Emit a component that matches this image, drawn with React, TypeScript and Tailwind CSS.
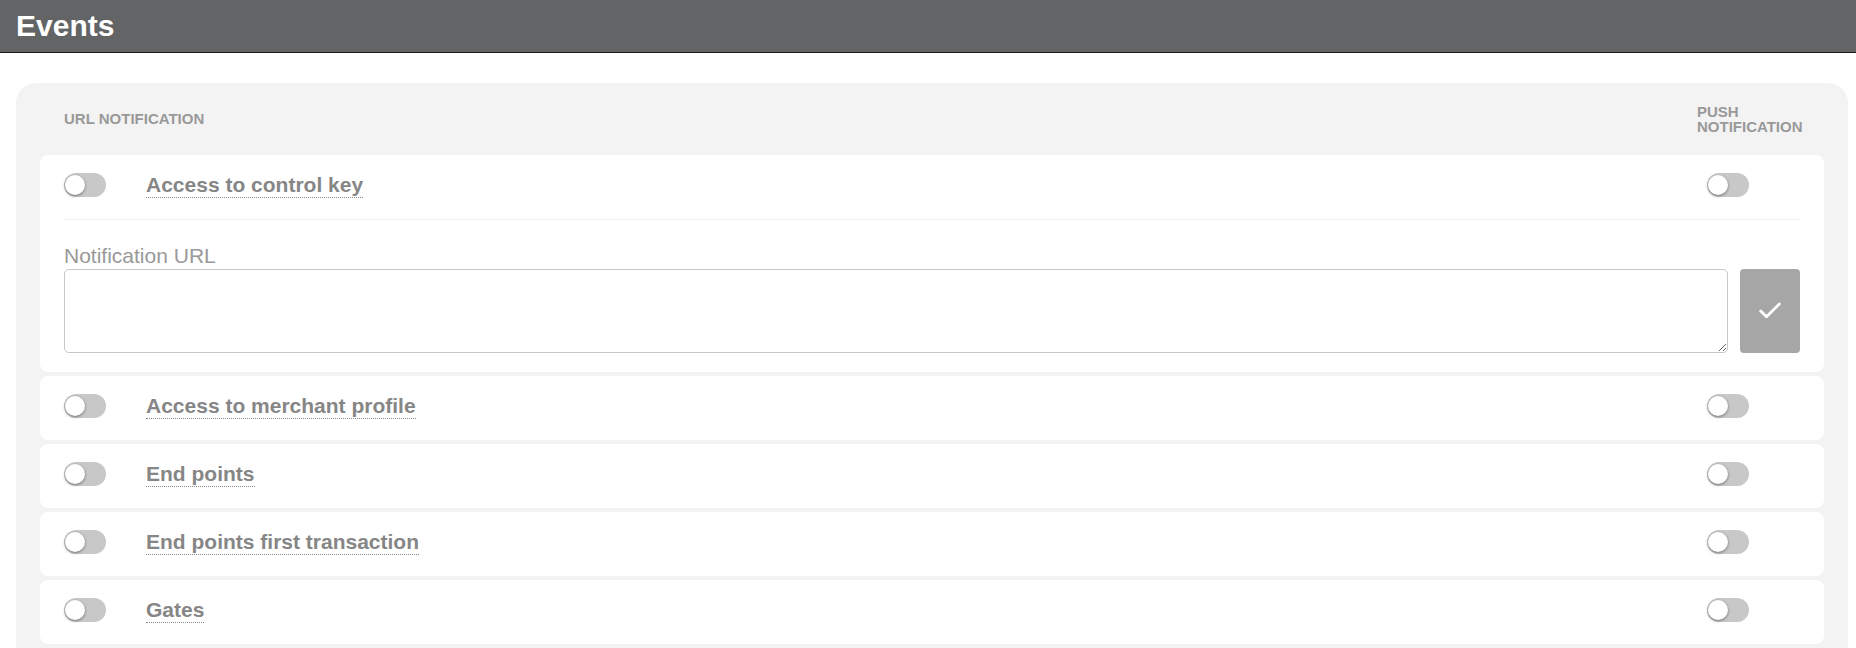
import React, { useState } from "react";
import { Check } from "lucide-react";

interface EventItem {
  id: string;
  name: string;
}

const events: EventItem[] = [
  { id: "control_key", name: "Access to control key" },
  { id: "merchant_profile", name: "Access to merchant profile" },
  { id: "end_points", name: "End points" },
  { id: "end_points_first", name: "End points first transaction" },
  { id: "gates", name: "Gates" },
];

const Toggle: React.FC<{ on: boolean; onClick: () => void }> = ({ on, onClick }) => (
  <button
    type="button"
    onClick={onClick}
    className={
      "relative shrink-0 w-[42px] h-[24px] rounded-full " +
      (on ? "bg-[#8ab4d8]" : "bg-[#c8c8c8]")
    }
  >
    <span
      className={
        "absolute top-[2px] w-[20px] h-[20px] rounded-full bg-white shadow-[0_1px_3px_rgba(0,0,0,0.45)] " +
        (on ? "left-[20px]" : "left-[1px]")
      }
    />
  </button>
);

const App: React.FC = () => {
  const [urlOn, setUrlOn] = useState<Record<string, boolean>>({});
  const [pushOn, setPushOn] = useState<Record<string, boolean>>({});
  const [expanded] = useState<string>("control_key");
  const [url, setUrl] = useState("");

  return (
    <div className="min-h-screen bg-white font-['Liberation_Sans',Arial,sans-serif]">
      {/* Title bar */}
      <div className="h-[53px] bg-[#636466] border-b border-[#1a1a1a] flex items-center px-4">
        <h1 className="text-[30px] font-bold text-white leading-none">Events</h1>
      </div>

      <div className="pl-4 pr-2 pt-[30px]">
        <div className="bg-[#f3f3f3] rounded-[20px] px-6 pb-6">
          {/* Column headings */}
          <div className="h-[72px] flex items-center justify-between pl-6 pr-[17px]">
            <span className="text-[15px] font-bold text-[#999] uppercase">URL notification</span>
            <span className="w-[110px] text-[15px] leading-[15px] font-bold text-[#999] uppercase">
              Push notification
            </span>
          </div>

          <div className="flex flex-col gap-1">
            {events.map((ev) => (
              <div key={ev.id} className="bg-white rounded-lg">
                <div className="flex items-start pl-6 pr-[75px] pt-[18px] pb-[21px]">
                  <Toggle
                    on={!!urlOn[ev.id]}
                    onClick={() => setUrlOn((p) => ({ ...p, [ev.id]: !p[ev.id] }))}
                  />
                  <div className="flex-1 ml-[40px] flex">
                    <span className="block text-[21px] leading-[24px] font-bold text-[#868686] border-b border-dotted border-[#8a8a8a] cursor-pointer">
                      {ev.name}
                    </span>
                  </div>
                  <Toggle
                    on={!!pushOn[ev.id]}
                    onClick={() => setPushOn((p) => ({ ...p, [ev.id]: !p[ev.id] }))}
                  />
                </div>

                {expanded === ev.id && (
                  <div className="mx-6 border-t border-[#f0f0f0] pt-6 pb-[19px]">
                    <label className="block text-[21px] leading-[23px] text-[#999]">
                      Notification URL
                    </label>
                    <div className="flex gap-3 mt-[2px]">
                      <textarea
                        value={url}
                        onChange={(e) => setUrl(e.target.value)}
                        className="flex-1 h-[84px] border border-[#c8c8c8] rounded-[5px] bg-white px-2 py-1 text-[16px] text-[#555] outline-none"
                      />
                      <button
                        type="button"
                        className="w-[60px] h-[84px] shrink-0 rounded-[4px] bg-[#a6a6a6] flex items-center justify-center"
                      >
                        <Check size={28} strokeWidth={2.4} color="#ffffff" />
                      </button>
                    </div>
                  </div>
                )}
              </div>
            ))}
          </div>
        </div>
      </div>
    </div>
  );
};

export default App;
